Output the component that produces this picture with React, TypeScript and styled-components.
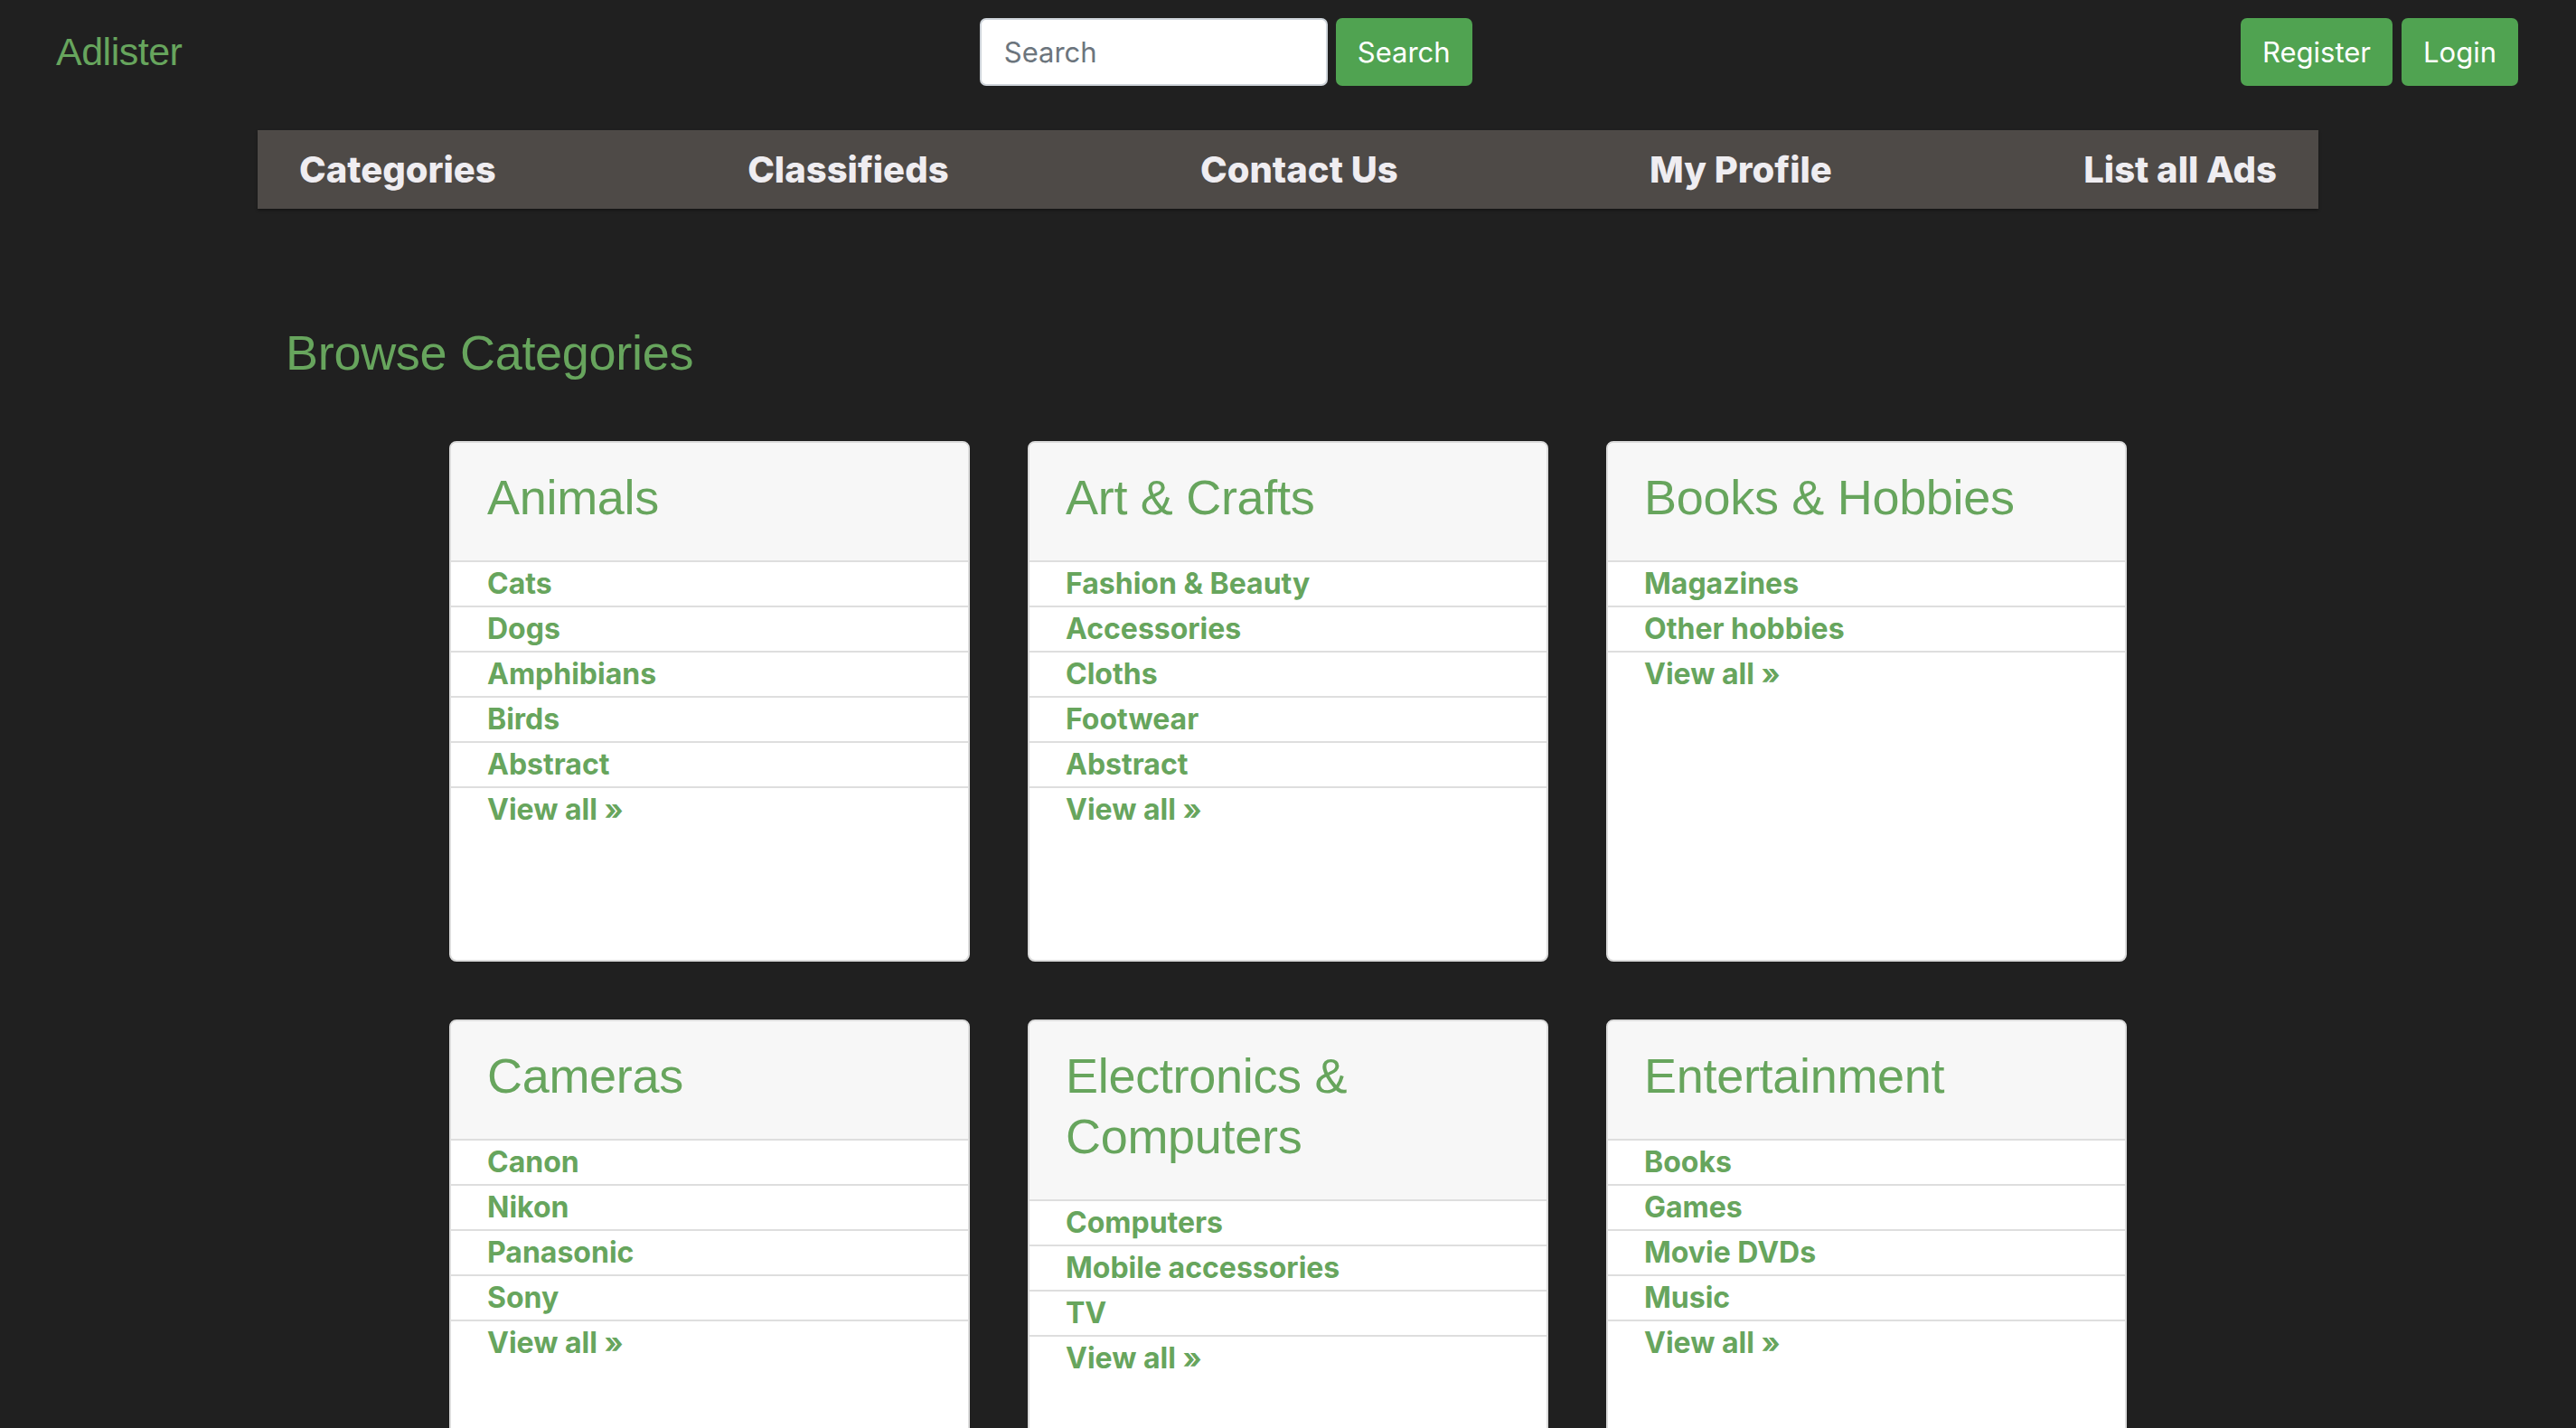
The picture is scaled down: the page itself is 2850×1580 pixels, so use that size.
import styled, { createGlobalStyle } from "styled-components";

const GREEN = "#67a55d";
const BUTTON_GREEN = "#50a351";

const GlobalStyle = createGlobalStyle`
  body {
    margin: 0;
    background: #202020;
    font-family: "Liberation Sans", Arial, sans-serif;
  }
  * { box-sizing: border-box; }
`;

type Category = { title: string; items: string[] };

const categories: Category[] = [
  { title: "Animals", items: ["Cats", "Dogs", "Amphibians", "Birds", "Abstract"] },
  { title: "Art & Crafts", items: ["Fashion & Beauty", "Accessories", "Cloths", "Footwear", "Abstract"] },
  { title: "Books & Hobbies", items: ["Magazines", "Other hobbies"] },
  { title: "Cameras", items: ["Canon", "Nikon", "Panasonic", "Sony"] },
  { title: "Electronics & Computers", items: ["Computers", "Mobile accessories", "TV"] },
  { title: "Entertainment", items: ["Books", "Games", "Movie DVDs", "Music"] },
];

const navLinks = ["Categories", "Classifieds", "Contact Us", "My Profile", "List all Ads"];

const App = (): JSX.Element => {
  return (
    <>
      <GlobalStyle />
      <TopBar>
        <Brand href="#">Adlister</Brand>
        <SearchForm onSubmit={(e) => e.preventDefault()}>
          <SearchInput placeholder="Search" />
          <GreenButton type="submit">Search</GreenButton>
        </SearchForm>
        <AuthGroup>
          <GreenButton>Register</GreenButton>
          <GreenButton>Login</GreenButton>
        </AuthGroup>
      </TopBar>

      <Container>
        <NavBar>
          {navLinks.map((link) => (
            <NavLink key={link} href="#">{link}</NavLink>
          ))}
        </NavBar>

        <Heading>Browse Categories</Heading>

        <CardGrid>
          {categories.map((cat) => (
            <Card key={cat.title}>
              <CardHeader>
                <CardTitle>{cat.title}</CardTitle>
              </CardHeader>
              <ItemList>
                {cat.items.map((item) => (
                  <Item key={item}><a href="#">{item}</a></Item>
                ))}
                <Item><a href="#">View all »</a></Item>
              </ItemList>
            </Card>
          ))}
        </CardGrid>
      </Container>
    </>
  );
};

const TopBar = styled.header`
  display: flex;
  align-items: center;
  justify-content: space-between;
  padding: 20px 64px 0 62px;
  height: 95px;
`;

const Brand = styled.a`
  color: ${GREEN};
  font-size: 43px;
  text-decoration: none;
  letter-spacing: -0.5px;
`;

const SearchForm = styled.form`
  display: flex;
  gap: 9px;
  margin: 0 0 0 32px;
`;

const SearchInput = styled.input`
  width: 385px;
  height: 75px;
  border: 2px solid #ced4da;
  border-radius: 7px;
  padding: 0 25px;
  font-family: Inter, sans-serif;
  font-size: 31px;
  color: #495057;
  background: #fff;
  outline: none;
  &::placeholder { color: #6c757d; }
`;

const GreenButton = styled.button`
  height: 75px;
  padding: 0 24px;
  border: none;
  border-radius: 7px;
  background: ${BUTTON_GREEN};
  color: #fff;
  font-family: Inter, sans-serif;
  font-size: 31px;
  cursor: pointer;
`;

const AuthGroup = styled.div`
  display: flex;
  gap: 10px;
`;

const Container = styled.main`
  width: 2280px;
  margin: 0 auto;
`;

const NavBar = styled.nav`
  margin-top: 49px;
  height: 87px;
  background: #4e4a47;
  display: flex;
  align-items: center;
  justify-content: space-between;
  padding: 0 46px;
  box-shadow: 0 2px 3px rgba(0, 0, 0, 0.35);
`;

const NavLink = styled.a`
  color: #efedf1;
  font-family: Inter, sans-serif;
  font-weight: 800;
  font-size: 40px;
  text-decoration: none;
`;

const Heading = styled.h2`
  margin: 128px 0 0 31px;
  color: ${GREEN};
  font-size: 54px;
  font-weight: 400;
  line-height: 62px;
  letter-spacing: -0.3px;
`;

const CardGrid = styled.section`
  margin-top: 67px;
  display: grid;
  grid-template-columns: repeat(3, 576px);
  gap: 64px;
  justify-content: center;
`;

const Card = styled.article`
  height: 576px;
  background: #fff;
  border: 2px solid #dcdcdc;
  border-radius: 8px;
  overflow: hidden;
`;

const CardHeader = styled.div`
  background: #f7f7f7;
  padding: 27px 40px 36px;
`;

const CardTitle = styled.h3`
  margin: 0;
  color: ${GREEN};
  font-size: 54px;
  font-weight: 400;
  line-height: 67px;
  letter-spacing: -0.3px;
`;

const ItemList = styled.ul`
  list-style: none;
  margin: 0;
  padding: 0;
`;

const Item = styled.li`
  border-top: 2px solid #dedede;
  padding: 0 40px;
  font-family: Inter, sans-serif;
  font-weight: 700;
  font-size: 32px;
  line-height: 48px;
  a {
    color: ${GREEN};
    text-decoration: none;
  }
`;

export default App;
